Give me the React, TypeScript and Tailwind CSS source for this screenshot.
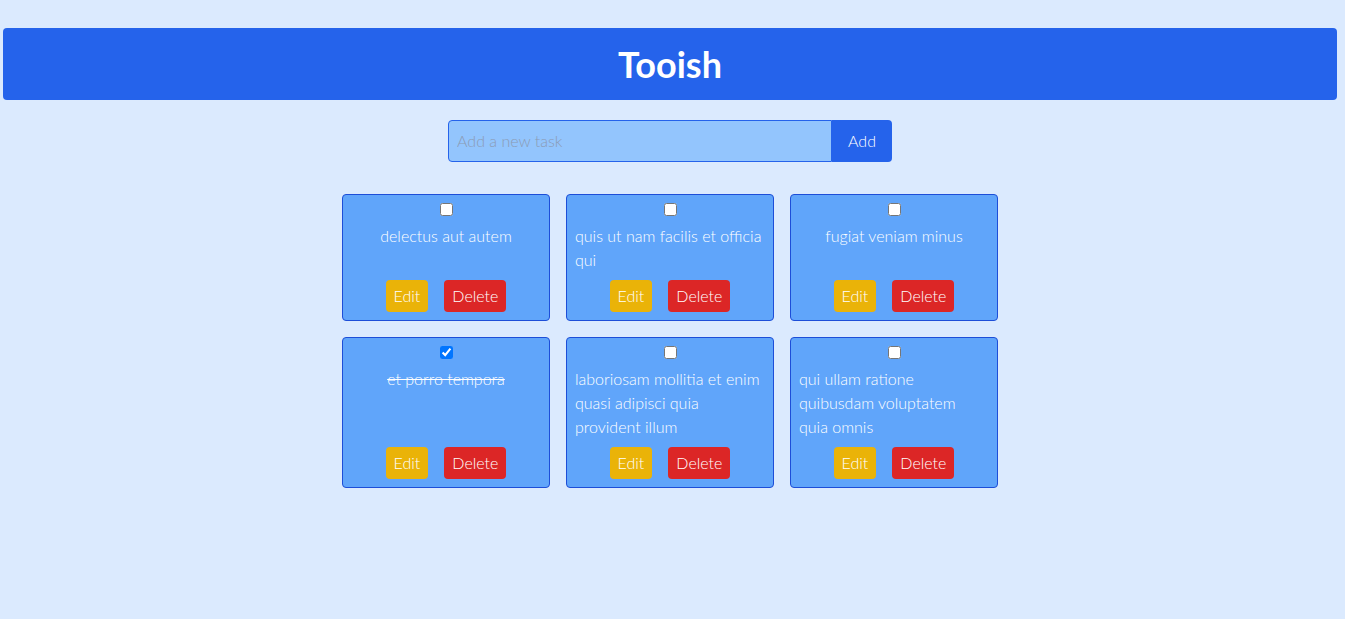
import React from "react";

const tasks = [
  { text: "delectus aut autem", done: false },
  { text: "quis ut nam facilis et officia qui", done: false },
  { text: "fugiat veniam minus", done: false },
  { text: "et porro tempora", done: true },
  { text: "laboriosam mollitia et enim quasi adipisci quia provident illum", done: false },
  { text: "qui ullam ratione quibusdam voluptatem quia\u00a0omnis", done: false },
];

export default function App() {
  return (
    <div
      className="min-h-screen bg-[#dbeafe] pl-[3px] pr-[8px] pt-7"
      style={{ fontFamily: "Lato, 'Open Sans', sans-serif" }}
    >
      <header className="rounded bg-[#2563eb] py-4 text-center">
        <h1 className="text-4xl font-bold text-white">Tooish</h1>
      </header>
      <div className="mt-5 flex justify-center">
        <input
          type="text"
          placeholder="Add a new task"
          className="w-96 rounded-l border border-[#2563eb] bg-[#93c5fd] px-2 py-2 text-base font-light text-black placeholder:text-[#8b9bb4] outline-none"
        />
        <button className="rounded-r bg-[#2563eb] px-4 py-2 text-base font-light text-white">
          Add
        </button>
      </div>
      <div className="mt-8 flex justify-center">
        <div className="grid grid-cols-[208px_208px_208px] gap-4">
          {tasks.map((t, i) => (
            <div
              key={i}
              className="flex flex-col items-center gap-2 rounded border border-[#1d4ed8] bg-[#60a5fa] p-2 text-white"
            >
              <input type="checkbox" defaultChecked={t.done} className="h-[13px] w-[13px]" />
              <span
                className={"text-base font-light leading-6 " + (t.done ? "line-through" : "")}
              >
                {t.text}
              </span>
              <div className="mt-auto flex gap-4">
                <button className="rounded bg-[#eab308] px-2 py-1 text-base font-light text-white">
                  Edit
                </button>
                <button className="rounded bg-[#dc2626] px-2 py-1 text-base font-light text-white">
                  Delete
                </button>
              </div>
            </div>
          ))}
        </div>
      </div>
    </div>
  );
}
